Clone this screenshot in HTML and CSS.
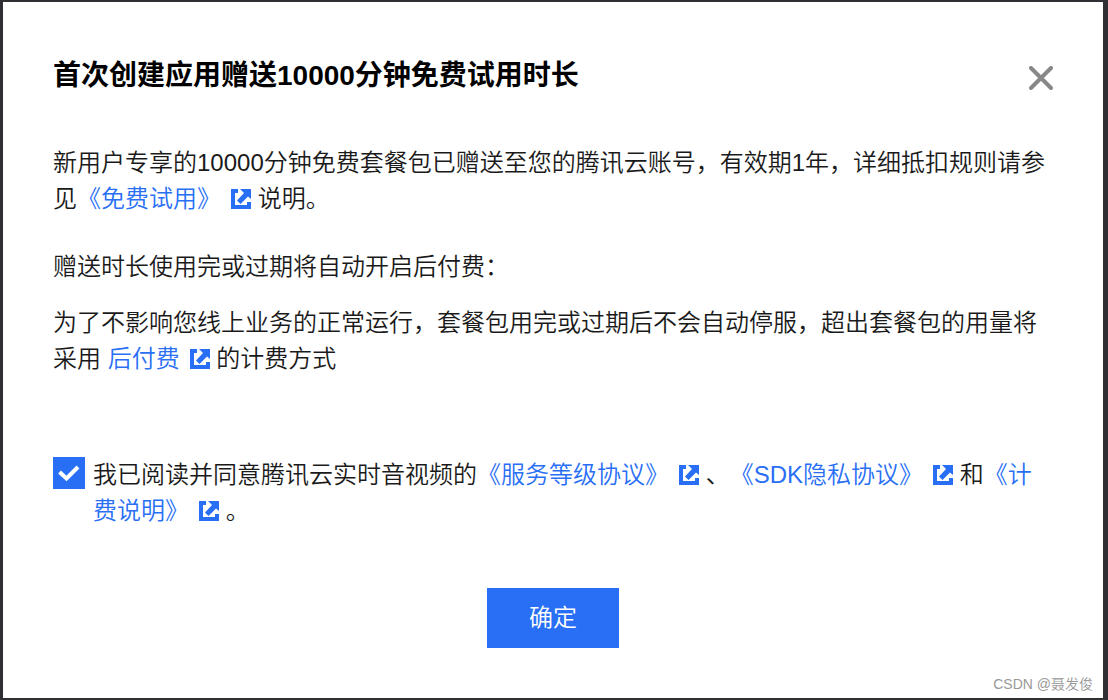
FILE: index.html
```html
<!DOCTYPE html>
<html lang="zh-CN">
<head>
    <meta charset="UTF-8">
    <meta name="viewport" content="width=device-width, initial-scale=1.0">
    <title>首次创建应用赠送10000分钟免费试用时长</title>
    <link rel="stylesheet" href="styles.css">
</head>
<body>
    <svg class="sprite" aria-hidden="true">
        <symbol id="external" viewBox="0 0 20 20">
            <path d="M0 0H7V4H4V16H16V13H20V20H0Z M9 0H20V10L17 7.500L9.500 15L6 11.500L13 4Z" fill="currentColor"/>
        </symbol>
    </svg>
    <div class="dialog" role="dialog" aria-labelledby="title">
        <div class="header">
            <h1 id="title">首次创建应用赠送10000分钟免费试用时长</h1>
            <button type="button" class="close" aria-label="关闭">
                <svg viewBox="0 0 24 24"><path d="M2 2L22 22M22 2L2 22"/></svg>
            </button>
        </div>
        <div class="content">
            <p class="intro">新用户专享的10000分钟免费套餐包已赠送至您的腾讯云账号，有效期1年，详细抵扣规则请参见<a href="#">《免费试用》<svg class="icon"><use href="#external"/></svg></a> 说明。</p>
            <p>赠送时长使用完或过期将自动开启后付费：</p>
            <p>为了不影响您线上业务的正常运行，套餐包用完或过期后不会自动停服，超出套餐包的用量将采用 <a href="#">后付费<svg class="icon"><use href="#external"/></svg></a> 的计费方式</p>
        </div>
        <div class="agreement">
            <span class="checkbox">
                <input type="checkbox" id="agree" checked>
                <svg viewBox="0 0 32 32"><path d="M6.500 15L13.500 21.500L25 10"/></svg>
            </span>
            <label for="agree">我已阅读并同意腾讯云实时音视频的<a href="#">《服务等级协议》<svg class="icon"><use href="#external"/></svg></a> 、<a href="#">《SDK隐私协议》<svg class="icon"><use href="#external"/></svg></a> 和<a href="#">《计费说明》<svg class="icon"><use href="#external"/></svg></a> 。</label>
        </div>
        <div class="footer">
            <button type="button" class="confirm">确定</button>
        </div>
        <span class="watermark">CSDN @聂发俊</span>
    </div>
</body>
</html>
```
FILE: styles.css
```css
* {
    box-sizing: border-box;
}

body {
    margin: 0;
    padding: 2px 5px 2px 3px;
    min-height: 100vh;
    display: flex;
    background-color: #303034;
    color: #1a1a1a;
    font-family: "Liberation Sans", "Noto Sans CJK SC", sans-serif;
    font-size: 24px;
    font-weight: 350;
    line-height: 36px;
    text-spacing-trim: space-all;
}

.sprite {
    position: absolute;
    width: 0;
    height: 0;
}

.dialog {
    position: relative;
    flex: 1;
    padding: 54px 50px 50px;
    background-color: #fff;
}

.header {
    display: flex;
    justify-content: space-between;
    align-items: flex-start;
    margin-bottom: 49px;
}

h1 {
    margin: 0;
    color: #000;
    font-size: 28px;
    font-weight: bold;
    line-height: 40px;
}

button {
    border: none;
    font-family: inherit;
    font-weight: inherit;
    cursor: pointer;
}

.close {
    width: 24px;
    height: 24px;
    margin-top: 10px;
    padding: 0;
    background: none;
}

.close svg {
    display: block;
    fill: none;
    stroke: #888;
    stroke-width: 4;
    stroke-linecap: round;
}

p {
    margin: 0 0 20px;
}

.intro {
    margin-bottom: 32px;
}

.content {
    margin-bottom: 80px;
}

a {
    color: #296ff6;
    text-decoration: none;
}

.icon {
    width: 20px;
    height: 20px;
    margin-left: 10px;
    vertical-align: -2px;
}

.agreement {
    display: flex;
    align-items: flex-start;
    gap: 8px;
    margin-bottom: 59px;
}

.checkbox {
    display: grid;
    flex: none;
    width: 32px;
    height: 32px;
}

.checkbox input,
.checkbox svg {
    grid-area: 1 / 1;
    width: 32px;
    height: 32px;
    margin: 0;
}

.checkbox input {
    appearance: none;
    border: 2px solid #296ff6;
}

.checkbox input:checked {
    background-color: #296ff6;
}

.checkbox svg {
    fill: none;
    stroke: #fff;
    stroke-width: 4;
    pointer-events: none;
}

.footer {
    text-align: center;
}

.confirm {
    padding: 12px 42px;
    background-color: #296ff6;
    color: #fff;
    font-size: 24px;
    line-height: 36px;
}

.confirm:hover {
    background-color: #1f5fdd;
}

.watermark {
    position: absolute;
    right: 10px;
    bottom: 4px;
    color: #999;
    font-size: 14px;
    line-height: 20px;
}
```
